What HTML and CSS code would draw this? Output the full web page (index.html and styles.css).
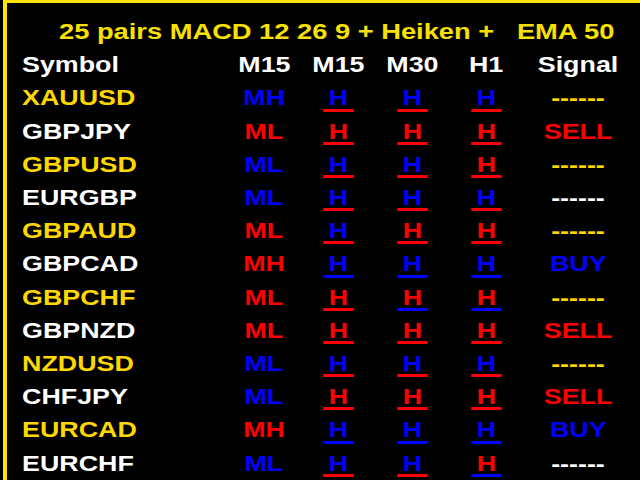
FILE: index.html
```html
<!DOCTYPE html>
<html>
<head>
<meta charset="utf-8">
<link rel="stylesheet" href="styles.css">
</head>
<body>
<div class="frame">
  <div class="title">25 pairs MACD 12 26 9 + Heiken +   EMA 50</div>
  <div class="table">
    <div class="row head"><span class="sym">Symbol</span><span>M15</span><span>M15</span><span>M30</span><span>H1</span><span>Signal</span></div>

    <div class="row gold"><span class="sym">XAUUSD</span><span class="fb">MH</span><span><i class="h fb ur">H</i></span><span><i class="h fb ur">H</i></span><span><i class="h fb ur">H</i></span><span>------</span></div>
    <div class="row white"><span class="sym">GBPJPY</span><span class="fr">ML</span><span><i class="h fr ur">H</i></span><span><i class="h fr ur">H</i></span><span><i class="h fr ur">H</i></span><span class="fr">SELL</span></div>
    <div class="row gold"><span class="sym">GBPUSD</span><span class="fb">ML</span><span><i class="h fb ur">H</i></span><span><i class="h fb ur">H</i></span><span><i class="h fr ur">H</i></span><span>------</span></div>
    <div class="row white"><span class="sym">EURGBP</span><span class="fb">ML</span><span><i class="h fb ur">H</i></span><span><i class="h fb ur">H</i></span><span><i class="h fb ur">H</i></span><span>------</span></div>
    <div class="row gold"><span class="sym">GBPAUD</span><span class="fr">ML</span><span><i class="h fb ur">H</i></span><span><i class="h fr ur">H</i></span><span><i class="h fr ur">H</i></span><span>------</span></div>
    <div class="row white"><span class="sym">GBPCAD</span><span class="fr">MH</span><span><i class="h fb ub">H</i></span><span><i class="h fb ub">H</i></span><span><i class="h fb ub">H</i></span><span class="fb">BUY</span></div>
    <div class="row gold"><span class="sym">GBPCHF</span><span class="fr">ML</span><span><i class="h fr ur">H</i></span><span><i class="h fr ub">H</i></span><span><i class="h fr ub">H</i></span><span>------</span></div>
    <div class="row white"><span class="sym">GBPNZD</span><span class="fr">ML</span><span><i class="h fr ur">H</i></span><span><i class="h fr ur">H</i></span><span><i class="h fr ur">H</i></span><span class="fr">SELL</span></div>
    <div class="row gold"><span class="sym">NZDUSD</span><span class="fb">ML</span><span><i class="h fb ur">H</i></span><span><i class="h fb ur">H</i></span><span><i class="h fb ur">H</i></span><span>------</span></div>
    <div class="row white"><span class="sym">CHFJPY</span><span class="fb">ML</span><span><i class="h fr ur">H</i></span><span><i class="h fr ur">H</i></span><span><i class="h fr ur">H</i></span><span class="fr">SELL</span></div>
    <div class="row gold"><span class="sym">EURCAD</span><span class="fr">MH</span><span><i class="h fb ub">H</i></span><span><i class="h fb ub">H</i></span><span><i class="h fb ub">H</i></span><span class="fb">BUY</span></div>
    <div class="row white"><span class="sym">EURCHF</span><span class="fb">ML</span><span><i class="h fb ur">H</i></span><span><i class="h fb ur">H</i></span><span><i class="h fr ub">H</i></span><span>------</span></div>
  </div>
</div>
</body>
</html>
```

FILE: styles.css
```css
html, body {
  margin: 0;
  padding: 0;
  background: #000;
  height: 100%;
  overflow: hidden;
}

body {
  font-family: "Liberation Sans", Arial, sans-serif;
  font-weight: bold;
  font-size: 22px;
  line-height: 33.2px;
  color: #fff;
}

.frame {
  margin-left: 3px;
  border-top: 3px solid #ffe400;
  border-left: 4px solid #ffe400;
  padding-top: 12px;
  height: 100vh;
  box-sizing: border-box;
}

.title {
  color: #f8e000;
  white-space: pre;
  width: max-content;
  margin-left: 52px;
  transform: scaleX(1.24);
  transform-origin: left center;
}

.row {
  display: grid;
  grid-template-columns: 206px 72px 76px 73px 75px 108px;
  padding-left: 15px;
}

.row > span {
  justify-self: center;
  transform: scaleX(1.22);
  transform-origin: center center;
  white-space: nowrap;
}

.row > .sym {
  justify-self: start;
  transform-origin: left center;
}

.head { color: #fff; }
.gold { color: #ffd700; }
.white { color: #fff; }

.fb { color: #0000ff; }
.fr { color: #ff0000; }

.h {
  font-style: normal;
  display: inline-block;
  width: 25px;
  text-align: center;
  line-height: 21.25px;
  border-bottom: 3px solid transparent;
}

.ur { border-bottom-color: #ff0000; }
.ub { border-bottom-color: #0000ff; }
```
